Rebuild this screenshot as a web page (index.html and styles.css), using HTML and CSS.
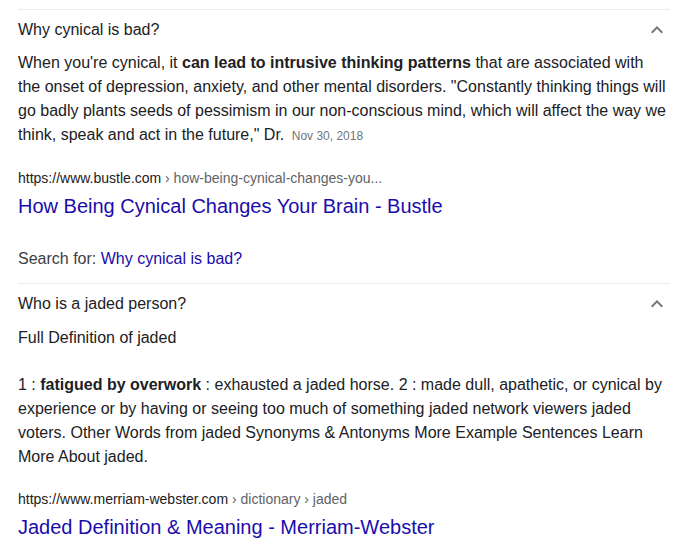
FILE: index.html
```html
<!DOCTYPE html>
<html>
<head>
<meta charset="utf-8">
<link rel="stylesheet" href="styles.css">
</head>
<body>
<div class="page">
  <section class="qa">
    <div class="q-row">
      <span class="q-text">Why cynical is bad?</span>
      <svg class="chev" viewBox="0 0 24 24" width="24" height="24"><path d="M7.41 15.41L12 10.83l4.59 4.58L18 14l-6-6-6 6z"/></svg>
    </div>
    <div class="answer">When you're cynical, it <b>can lead to intrusive thinking patterns</b> that are associated with the onset of depression, anxiety, and other mental disorders. "Constantly thinking things will go badly plants seeds of pessimism in our non-conscious mind, which will affect the way we think, speak and act in the future," Dr. <span class="date">Nov 30, 2018</span></div>
    <div class="cite first-cite">https://www.bustle.com<span class="path"> › how-being-cynical-changes-you...</span></div>
    <a class="title" href="#">How Being Cynical Changes Your Brain - Bustle</a>
    <div class="search-for">Search for: <a href="#">Why cynical is bad?</a></div>
  </section>
  <section class="qa">
    <div class="q-row">
      <span class="q-text">Who is a jaded person?</span>
      <svg class="chev" viewBox="0 0 24 24" width="24" height="24"><path d="M7.41 15.41L12 10.83l4.59 4.58L18 14l-6-6-6 6z"/></svg>
    </div>
    <div class="def-head">Full Definition of jaded</div>
    <div class="answer answer-def">1 : <b>fatigued by overwork</b> : exhausted a jaded horse. 2 : made dull, apathetic, or cynical by experience or by having or seeing too much of something jaded network viewers jaded voters. Other Words from jaded Synonyms &amp; Antonyms More Example Sentences Learn More About jaded.</div>
    <div class="cite second-cite">https://www.merriam-webster.com<span class="path"> › dictionary › jaded</span></div>
    <a class="title title-tight" href="#">Jaded Definition &amp; Meaning - Merriam-Webster</a>
  </section>
</div>
</body>
</html>
```
FILE: styles.css
```css
html, body {
  margin: 0;
  padding: 0;
  background: #ffffff;
}
body {
  font-family: "Liberation Sans", Arial, sans-serif;
  color: #202124;
  overflow: hidden;
}
.page {
  padding: 9px 0 0 18px;
  width: 652px;
}
.qa {
  border-top: 1px solid #ebebeb;
}
.q-row {
  display: flex;
  justify-content: space-between;
  align-items: center;
  padding: 8px 1px 9px 0;
  font-size: 16px;
  line-height: 24px;
  color: #202124;
}
.chev {
  display: block;
  fill: #70757a;
}
.answer {
  font-size: 16px;
  line-height: 24px;
  color: #202124;
}
.answer b {
  font-weight: bold;
  color: #202124;
}
.date {
  font-size: 12px;
  color: #70757a;
  margin-left: 3px;
}
.cite {
  font-size: 14px;
  line-height: 20px;
  color: #202124;
}
.cite .path {
  color: #5f6368;
}
.first-cite {
  margin-top: 20px;
}
.second-cite {
  margin-top: 20px;
}
.title {
  display: block;
  margin-top: 5px;
  font-size: 20px;
  line-height: 26px;
  color: #1a0dab;
  text-decoration: none;
}
.title-tight {
  margin-top: 5px;
}
.search-for {
  margin-top: 28px;
  margin-bottom: 12px;
  font-size: 16px;
  line-height: 24px;
  color: #3c4043;
}
.search-for a {
  color: #1a0dab;
  text-decoration: none;
}
.def-head {
  margin-top: 1px;
  font-size: 16px;
  line-height: 24px;
  color: #202124;
}
.answer-def {
  margin-top: 23px;
}
```
